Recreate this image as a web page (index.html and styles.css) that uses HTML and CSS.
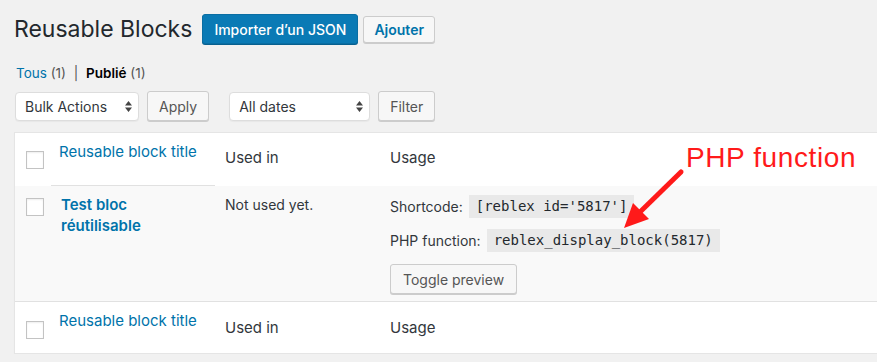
FILE: index.html
```html
<!DOCTYPE html>
<html lang="fr">
<head>
  <meta charset="UTF-8">
  <meta name="viewport" content="width=device-width, initial-scale=1.0">
  <title>Reusable Blocks</title>
  <link rel="stylesheet" href="styles.css">
</head>
<body>
  <div class="wrap">
    <div class="page-head">
      <h1>Reusable Blocks</h1>
      <a href="#" class="btn btn-primary">Importer d’un JSON</a>
      <a href="#" class="btn btn-add">Ajouter</a>
    </div>

    <div class="subsubsub">
      <a href="#">Tous</a> <span class="count">(1)</span>
      <span class="sep">|</span>
      <strong>Publié</strong> <span class="count">(1)</span>
    </div>

    <div class="tablenav">
      <div class="select select-bulk">
        <span>Bulk Actions</span>
        <svg width="7" height="11" viewBox="0 0 7 11"><path d="M0 4.5L3.5 0L7 4.5Z M0 6.5H7L3.5 11Z" fill="#444"/></svg>
      </div>
      <button class="btn">Apply</button>
      <div class="select select-dates">
        <span>All dates</span>
        <svg width="7" height="11" viewBox="0 0 7 11"><path d="M0 4.5L3.5 0L7 4.5Z M0 6.5H7L3.5 11Z" fill="#444"/></svg>
      </div>
      <button class="btn">Filter</button>
    </div>

    <table class="list-table">
      <colgroup>
        <col class="col-check">
        <col class="col-title">
        <col class="col-used">
        <col>
      </colgroup>
      <thead>
        <tr>
          <th class="check"><span class="cb"></span></th>
          <th class="title"><a href="#">Reusable block title</a></th>
          <th class="plain">Used in</th>
          <th class="plain">Usage</th>
        </tr>
      </thead>
      <tbody>
        <tr>
          <td class="check"><span class="cb"></span></td>
          <td class="title"><a href="#" class="row-title">Test bloc réutilisable</a></td>
          <td class="plain">Not used yet.</td>
          <td class="usage">
            <div class="usage-line">Shortcode: <code>[reblex id='5817']</code></div>
            <div class="usage-line">PHP function: <code>reblex_display_block(5817)</code></div>
            <button class="btn btn-toggle">Toggle preview</button>
          </td>
        </tr>
      </tbody>
      <tfoot>
        <tr>
          <th class="check"><span class="cb"></span></th>
          <th class="title"><a href="#">Reusable block title</a></th>
          <th class="plain">Used in</th>
          <th class="plain">Usage</th>
        </tr>
      </tfoot>
    </table>

    <div class="note">PHP function</div>
    <svg class="note-arrow" width="90" height="80" viewBox="0 0 90 80">
      <line x1="81" y1="12" x2="40" y2="52" stroke="#ff1a1a" stroke-width="5" stroke-linecap="round"/>
      <polygon points="24,68 33,43 49,59" fill="#ff1a1a"/>
    </svg>
  </div>
</body>
</html>
```

FILE: styles.css
```css
body {
  margin: 0;
  background: #f1f1f1;
  color: #23282d;
  font-family: Inter, "Noto Sans", sans-serif;
  font-size: 14px;
  overflow: hidden;
}

.wrap {
  position: relative;
  padding-left: 14px;
}

a {
  color: #0073aa;
  text-decoration: none;
}

.page-head {
  display: flex;
  align-items: center;
  padding-top: 14px;
}

h1 {
  margin: 0 10px 0 0;
  font-size: 23px;
  font-weight: 400;
  color: #23282d;
}

.btn {
  display: inline-flex;
  align-items: center;
  box-sizing: border-box;
  height: 30px;
  padding: 0 12px;
  border: 1px solid #ccc;
  border-radius: 3px;
  background: #f7f7f7;
  box-shadow: 0 1px 0 #ccc;
  color: #555;
  font-family: inherit;
  font-size: 14px;
}

.btn-primary {
  padding: 0 11px;
  background: #0a7ab5;
  border-color: #0a6ea3;
  box-shadow: 0 1px 0 #07608f;
  color: #fff;
  font-weight: 500;
}

.btn-add {
  height: 27px;
  margin-left: 5px;
  padding: 0 10px;
  color: #0073aa;
  font-weight: 600;
}

.subsubsub {
  margin: 19px 0 0 2px;
  font-size: 13.5px;
  line-height: 20px;
  color: #555;
}
.subsubsub strong { color: #000; font-weight: 600; }
.subsubsub .sep { margin: 0 4px; }

.tablenav {
  display: flex;
  align-items: center;
  margin-top: 8px;
  padding-left: 1px;
}

.select {
  display: flex;
  align-items: center;
  justify-content: space-between;
  box-sizing: border-box;
  height: 29px;
  padding: 0 6px 0 9px;
  background: #fff;
  border: 1px solid #ddd;
  border-radius: 4px;
  box-shadow: 0 1px 1px rgba(0,0,0,0.04);
  color: #32373c;
}
.select-bulk { width: 124px; margin-right: 8px; }
.select-dates { width: 141px; margin: 0 8px 0 20px; }

.tablenav .btn { height: 30px; padding: 0 11px; }

.list-table {
  width: 900px;
  margin-top: 11px;
  border: 1px solid #e5e5e5;
  border-spacing: 0;
  table-layout: fixed;
  background: #fff;
  box-shadow: 0 1px 1px rgba(0,0,0,0.04);
}
.col-check { width: 36px; }
.col-title { width: 164px; }
.col-used { width: 165px; }

.list-table th,
.list-table td {
  padding: 0 10px;
  text-align: left;
  vertical-align: top;
  font-weight: 400;
  line-height: 20px;
  color: #32373c;
}
.list-table th { font-size: 15px; }

.list-table .check { padding-left: 11px; padding-right: 0; }
.cb {
  display: block;
  box-sizing: border-box;
  width: 18px;
  height: 18px;
  border: 1px solid #c3c3c3;
  background: #fff;
  box-shadow: inset 0 1px 2px rgba(0,0,0,0.07);
}

.list-table thead th { height: 53px; box-sizing: border-box; }
.list-table thead .check { padding-top: 18px; }
.list-table thead .title { padding: 9px 8px 0; border-bottom: 1px solid #e1e1e1; }
.list-table thead .plain { padding-top: 15px; }

.list-table tbody td {
  background: #f9f9f9;
  border-bottom: 1px solid #e1e1e1;
}
.list-table tbody .check { padding-top: 12px; }
.list-table tbody .title { padding-top: 8px; }
.list-table tbody .plain { padding-top: 9px; }

.row-title {
  display: inline-block;
  max-width: 120px;
  font-size: 15px;
  font-weight: 600;
  line-height: 21px;
}

.list-table .usage { padding-top: 9px; padding-bottom: 7px; }
.usage-line {
  display: flex;
  align-items: center;
  gap: 6px;
  height: 23px;
  margin-bottom: 11px;
}
.usage-line code {
  padding: 2px 7px;
  background: #e9e9e9;
  color: #23282d;
  font-family: "DejaVu Sans Mono", monospace;
  font-size: 14px;
  line-height: 19px;
}
.btn-toggle { margin-top: 1px; }

.list-table tfoot th { height: 51px; box-sizing: border-box; }
.list-table tfoot .check { padding-top: 19px; }
.list-table tfoot .title { padding: 9px 8px 0; }
.list-table tfoot .plain { padding-top: 16px; }

.note {
  position: absolute;
  left: 686px;
  top: 143px;
  color: #ff1a1a;
  font-family: "Liberation Sans", Arial, sans-serif;
  font-size: 28px;
  letter-spacing: 0.6px;
  line-height: 30px;
}
.note-arrow {
  position: absolute;
  left: 600px;
  top: 160px;
}
```
